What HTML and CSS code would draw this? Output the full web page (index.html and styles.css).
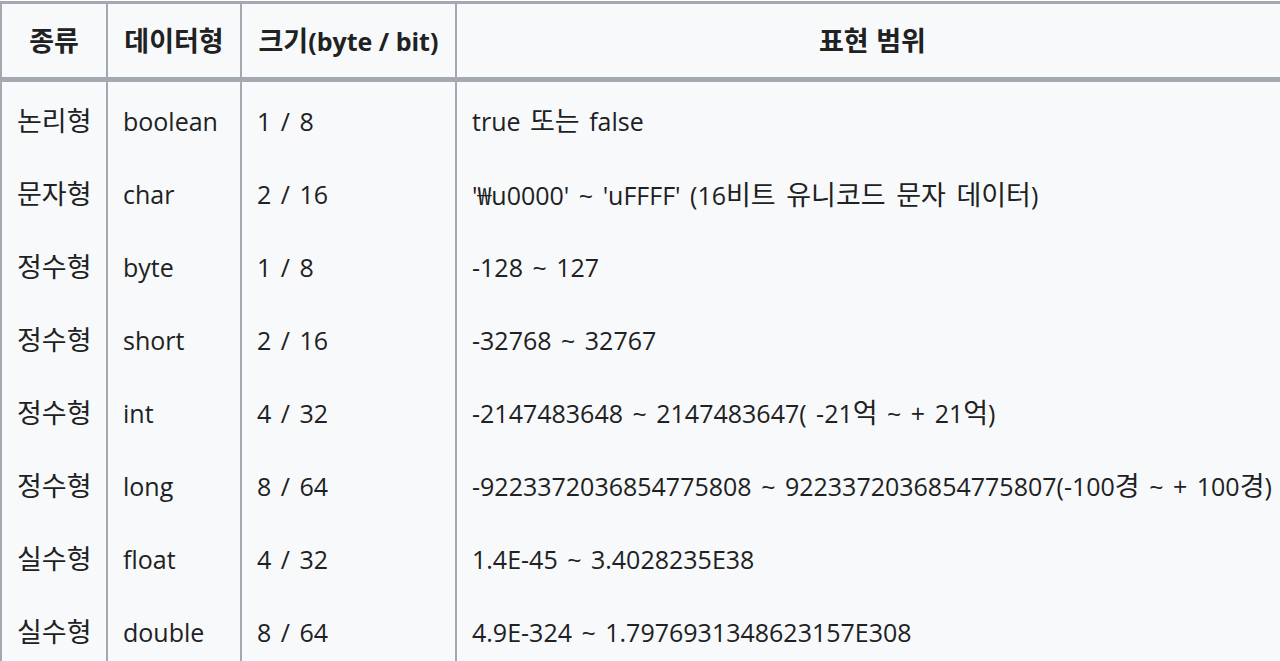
FILE: index.html
```
<!DOCTYPE html>
<html lang="ko">

<head>
    <meta charset="UTF-8">
    <meta name="viewport" content="width=device-width, initial-scale=1.0">
    <title>자바 기본 데이터형</title>
    <link rel="stylesheet" href="styles.css">
</head>

<body>
    <!-- Primitive type table -->
    <table class="type-table">
        <thead>
            <tr>
                <th class="col-kind"><span class="ko">종류</span></th>
                <th class="col-type"><span class="ko">데이터형</span></th>
                <th class="col-size"><span class="ko">크기</span>(byte / bit)</th>
                <th class="col-range"><span class="ko">표현 범위</span></th>
            </tr>
        </thead>
        <tbody>
            <tr>
                <td><span class="ko">논리형</span></td>
                <td>boolean</td>
                <td>1 / 8</td>
                <td>true <span class="ko">또는</span> false</td>
            </tr>
            <tr>
                <td><span class="ko">문자형</span></td>
                <td>char</td>
                <td>2 / 16</td>
                <td>'₩u0000' ~ 'uFFFF' (16<span class="ko">비트 유니코드 문자 데이터</span>)</td>
            </tr>
            <tr>
                <td><span class="ko">정수형</span></td>
                <td>byte</td>
                <td>1 / 8</td>
                <td>-128 ~ 127</td>
            </tr>
            <tr>
                <td><span class="ko">정수형</span></td>
                <td>short</td>
                <td>2 / 16</td>
                <td>-32768 ~ 32767</td>
            </tr>
            <tr>
                <td><span class="ko">정수형</span></td>
                <td>int</td>
                <td>4 / 32</td>
                <td>-2147483648 ~ 2147483647( -21<span class="ko">억</span> ~ + 21<span class="ko">억</span>)</td>
            </tr>
            <tr>
                <td><span class="ko">정수형</span></td>
                <td>long</td>
                <td>8 / 64</td>
                <td>-9223372036854775808 ~ 9223372036854775807(-100<span class="ko">경</span> ~ + 100<span class="ko">경</span>)</td>
            </tr>
            <tr>
                <td><span class="ko">실수형</span></td>
                <td>float</td>
                <td>4 / 32</td>
                <td>1.4E-45 ~ 3.4028235E38</td>
            </tr>
            <tr>
                <td><span class="ko">실수형</span></td>
                <td>double</td>
                <td>8 / 64</td>
                <td>4.9E-324 ~ 1.7976931348623157E308</td>
            </tr>
        </tbody>
    </table>
</body>

</html>
```

FILE: styles.css
```
body {
    font-family: 'Open Sans', 'Noto Sans CJK KR', sans-serif;
    margin: 0;
    padding: 1px 0 0 0;
    background-color: white;
    color: #202122;
    overflow: hidden;
}

.type-table {
    width: 1290px;
    table-layout: fixed;
    border-collapse: separate;
    border-spacing: 0;
    background-color: #f8f9fa;
    border-top: 3px solid #a2a9b1;
    border-left: 2px solid #a2a9b1;
    font-size: 25px;
}

.type-table th,
.type-table td {
    border-right: 2px solid #a2a9b1;
    padding: 0 15px;
    white-space: nowrap;
    text-align: left;
    box-sizing: border-box;
}

.type-table th {
    height: 78px;
    font-weight: bold;
    text-align: center;
    border-bottom: 5px solid #a2a9b1;
}

.type-table td {
    height: 73px;
    padding-top: 4px;
    word-spacing: 3px;
}

/* Korean glyphs are drawn larger than the latin ones */
.ko {
    font-family: 'Noto Sans CJK KR', sans-serif;
    font-size: 27px;
    line-height: 1;
}

.col-kind {
    width: 106px;
}

.col-type {
    width: 134px;
}

.col-size {
    width: 215px;
}
```
